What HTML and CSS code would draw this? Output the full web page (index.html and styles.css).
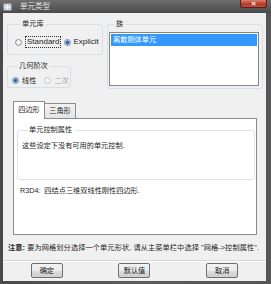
FILE: index.html
```html
<!DOCTYPE html>
<html>
<head>
<meta charset="utf-8">
<link rel="stylesheet" href="styles.css">
</head>
<body>
<div class="window">
  <div class="titlebar">
    <svg class="app-icon" width="9" height="8" viewBox="0 0 9 8"><rect x="0.5" y="0.5" width="8" height="7" rx="1" fill="#c9ced6" stroke="#8a9099"/><path d="M4.5 1.5v5M1.5 4h6" stroke="#ffffff" stroke-width="1.2"/></svg>
    <span class="title">单元类型</span>
    <span class="close">×</span>
  </div>
  <div class="client">
    <div class="top">
      <div class="left-col">
        <fieldset class="group g-lib">
          <legend>单元库</legend>
          <div class="radio-row">
            <span class="radio"><span class="dot"></span><span class="focus">Standard</span></span>
            <span class="radio r-explicit"><span class="dot on"></span>Explicit</span>
          </div>
        </fieldset>
        <fieldset class="group g-order">
          <legend>几何阶次</legend>
          <div class="radio-row">
            <span class="radio"><span class="dot on"></span>线性</span>
            <span class="radio disabled r-quad"><span class="dot off"></span>二次</span>
          </div>
        </fieldset>
      </div>
      <fieldset class="group g-family">
        <legend>族</legend>
        <div class="listbox">
          <div class="item selected">离散刚体单元</div>
        </div>
      </fieldset>
    </div>
    <div class="tabs">
      <div class="tabstrip">
        <span class="tab active">四边形</span>
        <span class="tab">三角形</span>
      </div>
      <div class="panel">
        <fieldset class="group g-ctrl">
          <legend>单元控制属性</legend>
          <div class="ctrl-text">这些设定下没有可用的单元控制.</div>
        </fieldset>
        <div class="desc">R3D4:&nbsp; 四结点三维双线性刚性四边形.</div>
      </div>
    </div>
    <div class="note"><b>注意:</b> 要为网格划分选择一个单元形状, 请从主菜单栏中选择 "网格->控制属性".</div>
    <div class="sep"></div>
    <div class="buttons">
      <span class="btn">确定</span>
      <span class="btn">默认值</span>
      <span class="btn">取消</span>
    </div>
  </div>
</div>
</body>
</html>
```
FILE: styles.css
```css
* { box-sizing: border-box; }
html, body { margin: 0; padding: 0; }
body {
  background: #3c3c3c;
  font-family: "Liberation Sans", "Noto Sans CJK SC", sans-serif;
  font-size: 7.2px;
  color: #1e1e1e;
}
.window {
  width: 271px;
  height: 284px;
  display: flex;
  flex-direction: column;
  background: linear-gradient(90deg, #4a4a4a, #5c5c5c 50%, #555555);
}
.titlebar {
  height: 13px;
  flex: none;
  display: flex;
  align-items: center;
  padding-left: 3px;
  background: linear-gradient(#6e6e6e, #4a4a4a);
  color: #e4e4e4;
}
.app-icon { margin-right: 8px; }
.title { font-size: 7.5px; line-height: 10px; }
.close {
  margin-left: auto;
  margin-right: 4px;
  align-self: flex-start;
  width: 27px;
  height: 8px;
  border: 1px solid #5a1e16;
  border-top: none;
  border-radius: 0 0 3px 3px;
  background: linear-gradient(#d9806e, #b3382a 60%, #c4513f);
  color: #fff;
  font-size: 8px;
  line-height: 7px;
  text-align: center;
  font-weight: bold;
}
.client {
  flex: 1;
  margin: 0 5px 3px 3px;
  background: #f0f0f0;
  display: flex;
  flex-direction: column;
}
.top {
  display: grid;
  grid-template-columns: 96px 156px;
  column-gap: 4px;
  padding: 6px 3px 0 4px;
}
.left-col {
  display: flex;
  flex-direction: column;
  gap: 6px;
}
fieldset.group {
  margin: 0;
  min-width: 0;
  border: 1px solid #d5dfe5;
  border-radius: 3px;
  padding: 0;
}
fieldset.group legend {
  margin-left: 5px;
  padding: 0 2px;
  line-height: 10px;
  font-size: 7.2px;
  color: #1e1e1e;
}
.g-lib { padding: 7px 0 6px 7px !important; }
.g-order { width: 64px; padding: 4px 0 1px 4px !important; }
.g-family { padding: 3px 3px 2px 1px !important; }
.radio-row {
  display: flex;
  align-items: center;
  height: 12px;
}
.g-order .radio-row { height: 11px; }
.radio {
  display: flex;
  align-items: center;
  gap: 3px;
  line-height: 10px;
  white-space: nowrap;
}
.radio .focus {
  font-size: 8px;
  border: 1px dotted #333;
  padding: 0 1px;
  line-height: 10px;
}
.r-explicit { margin-left: 3px; gap: 2px; font-size: 8px; }
.r-quad { margin-left: 8px; }
.dot {
  width: 7px;
  height: 7px;
  border-radius: 50%;
  border: 1px solid #8f8f8f;
  background: radial-gradient(circle at 50% 40%, #ffffff, #dcdcdc);
  flex: none;
}
.dot.on {
  background: radial-gradient(circle, #1e4f92 0, #3c7ac6 1.6px, #d8e4f0 2.4px, #f4f4f4 3.5px);
  border-color: #7a8fa6;
}
.dot.off { border-color: #c4c4c4; background: #f4f4f4; }
.disabled { color: #a6a6a6; }
.listbox {
  height: 54px;
  border: 1px solid #828790;
  background: #ffffff;
  padding: 1px;
}
.item {
  height: 12px;
  line-height: 12px;
  padding-left: 2px;
}
.item.selected { background: #3399ff; color: #ffffff; }
.tabs {
  margin-top: 12px;
  padding-left: 10px;
  padding-right: 9px;
}
.tabstrip {
  display: flex;
  align-items: flex-end;
  height: 17px;
}
.tab {
  height: 15px;
  width: 31px;
  border: 1px solid #898c95;
  border-bottom: none;
  border-left: none;
  background: linear-gradient(#f2f2f2, #e3e3e3);
  text-align: center;
  line-height: 14px;
}
.tab.active {
  height: 18px;
  width: 32px;
  border-left: 1px solid #898c95;
  background: #ffffff;
  margin-bottom: -1px;
  position: relative;
  z-index: 1;
  line-height: 16px;
}
.panel {
  height: 117px;
  border: 1px solid #898c95;
  background: #ffffff;
  padding: 6px 1px 0 3px;
}
.g-ctrl { padding: 6px 0 28px 4px !important; border-color: #dde3e8 !important; }
.ctrl-text { line-height: 10px; }
.desc {
  margin-top: 6px;
  padding-left: 3px;
  line-height: 10px;
  font-size: 7.2px;
}
.note {
  margin-top: 8px;
  padding-left: 5px;
  line-height: 10px;
  white-space: nowrap;
  letter-spacing: 0.1px;
}
.note b { font-weight: bold; }
.sep {
  margin-top: 7px;
  height: 2px;
  border-top: 1px solid #d8d8d8;
  border-bottom: 1px solid #ffffff;
}
.buttons {
  margin-top: 1px;
  display: flex;
  justify-content: space-around;
  padding: 0 0 1px;
}
.btn {
  width: 32px;
  height: 15px;
  border: 1px solid #707070;
  border-radius: 2px;
  background: linear-gradient(#f2f2f2, #ebebeb 50%, #dddddd 50%, #cfcfcf);
  text-align: center;
  line-height: 13px;
}
```
